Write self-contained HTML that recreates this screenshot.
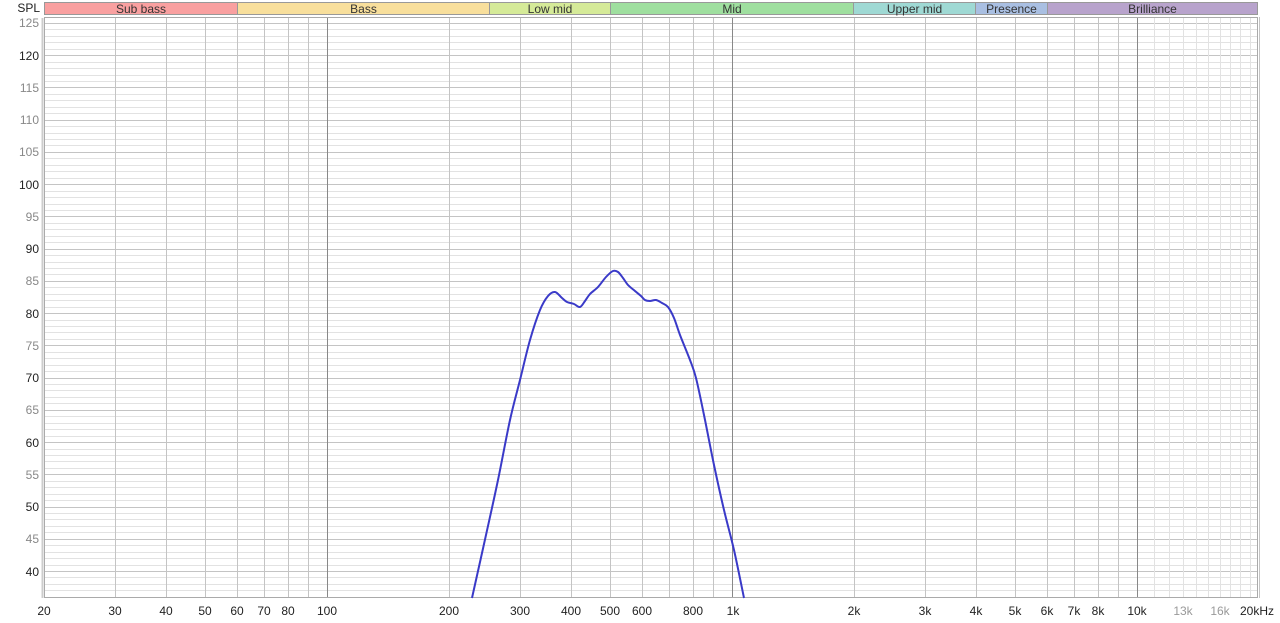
<!DOCTYPE html>
<html><head><meta charset="utf-8"><style>
body{margin:0;width:1280px;height:623px;background:#fff;font-family:"Liberation Sans",sans-serif;overflow:hidden;position:relative}
.yl{position:absolute;right:1241px;font-size:12px;color:#222;line-height:12px}
.xl{position:absolute;top:604px;font-size:12px;color:#222;transform:translateX(-50%)}
.band{position:absolute;top:2px;height:13px;font-size:12px;line-height:13px;text-align:center;color:#333;border:1px solid #999;box-sizing:border-box}
</style></head><body>
<svg id="g" width="1280" height="623" style="position:absolute;left:0;top:0"></svg>
<div class="yl" style="top:2px;right:1240px">SPL</div>
<div class="band" style="left:44px;width:194px;background:#f9a0a0">Sub bass</div>
<div class="band" style="left:237px;width:253px;background:#f8df9c">Bass</div>
<div class="band" style="left:489px;width:122px;background:#d5ea98">Low mid</div>
<div class="band" style="left:610px;width:244px;background:#9fdf9f">Mid</div>
<div class="band" style="left:853px;width:123px;background:#9fd9d4">Upper mid</div>
<div class="band" style="left:975px;width:73px;background:#a9bfe2">Presence</div>
<div class="band" style="left:1047px;width:211px;background:#b8a3cc">Brilliance</div>
<div class="yl" style="top:17px;color:#888">125</div>
<div class="yl" style="top:50px">120</div>
<div class="yl" style="top:82px;color:#888">115</div>
<div class="yl" style="top:114px;color:#888">110</div>
<div class="yl" style="top:146px;color:#888">105</div>
<div class="yl" style="top:179px">100</div>
<div class="yl" style="top:211px;color:#888">95</div>
<div class="yl" style="top:243px">90</div>
<div class="yl" style="top:275px;color:#888">85</div>
<div class="yl" style="top:308px">80</div>
<div class="yl" style="top:340px;color:#888">75</div>
<div class="yl" style="top:372px">70</div>
<div class="yl" style="top:404px;color:#888">65</div>
<div class="yl" style="top:437px">60</div>
<div class="yl" style="top:469px;color:#888">55</div>
<div class="yl" style="top:501px">50</div>
<div class="yl" style="top:533px;color:#888">45</div>
<div class="yl" style="top:566px">40</div>
<div class="xl" style="left:44px">20</div>
<div class="xl" style="left:115px">30</div>
<div class="xl" style="left:166px">40</div>
<div class="xl" style="left:205px">50</div>
<div class="xl" style="left:237px">60</div>
<div class="xl" style="left:264px">70</div>
<div class="xl" style="left:288px">80</div>
<div class="xl" style="left:327px">100</div>
<div class="xl" style="left:449px">200</div>
<div class="xl" style="left:520px">300</div>
<div class="xl" style="left:571px">400</div>
<div class="xl" style="left:610px">500</div>
<div class="xl" style="left:642px">600</div>
<div class="xl" style="left:693px">800</div>
<div class="xl" style="left:733px">1k</div>
<div class="xl" style="left:854px">2k</div>
<div class="xl" style="left:925px">3k</div>
<div class="xl" style="left:976px">4k</div>
<div class="xl" style="left:1015px">5k</div>
<div class="xl" style="left:1047px">6k</div>
<div class="xl" style="left:1074px">7k</div>
<div class="xl" style="left:1098px">8k</div>
<div class="xl" style="left:1137px">10k</div>
<div class="xl" style="left:1183px;color:#999">13k</div>
<div class="xl" style="left:1220px;color:#999">16k</div>
<div class="xl" style="left:1257px">20kHz</div>
<script>
var s='',X=function(f){return 327+405*Math.log10(f/100)};
var Y=function(d){return 23+(125-d)*6.447};
s+='<rect x="44" y="17" width="1214" height="581" fill="#fff"/>';
for(var d=36;d<=125;d++){var y=Math.round(Y(d))+.5;s+='<line x1="44" x2="1258" y1="'+y+'" y2="'+y+'" stroke="'+(d%5?'#e2e2e2':'#c4c4c4')+'"/>';}
var fs=[];for(var dec=10;dec<=10000;dec*=10)for(var k=1;k<10;k++){var f=k*dec;if(f>=20&&f<=20000)fs.push([f,k==1?'#888':'#c4c4c4']);}
for(var f=11000;f<20000;f+=1000)if(f%1000==0&&[20000].indexOf(f)<0)fs.push([f,'#e2e2e2']);
fs.forEach(function(a){var x=Math.round(X(a[0]))+.5;s+='<line y1="17" y2="598" x1="'+x+'" x2="'+x+'" stroke="'+a[1]+'"/>';});
s+='<rect x="44.5" y="17.5" width="1213" height="580" fill="none" stroke="#aaa"/>';
s+='<line x1="42.5" x2="42.5" y1="18" y2="598" stroke="#ccc" stroke-width="2"/>';
var p=[[472,598],[486,535],[498,480],[510,420],[520,380],[530,340],[540,310],[548,296],[555,292],[562,298],[567,302],[574,304],[580,307],[585,301],[590,294],[598,287],[606,277],[613,271],[618,272],[623,278],[628,285],[635,291],[641,296],[645,300],[650,301],[656,300],[662,303],[668,307],[674,318],[680,335],[690,360],[696,378],[704,415],[714,465],[724,510],[734,550],[744,598]];
var dd='M'+p[0].join(',');for(var i=1;i<p.length;i++){var a=p[i-1],b=p[i],c=p[Math.max(i-2,0)],e=p[Math.min(i+1,p.length-1)];dd+=' C'+(a[0]+(b[0]-c[0])/6)+','+(a[1]+(b[1]-c[1])/6)+' '+(b[0]-(e[0]-a[0])/6)+','+(b[1]-(e[1]-a[1])/6)+' '+b[0]+','+b[1];}
s+='<path d="'+dd+'" fill="none" stroke="#3a3ac8" stroke-width="2"/>';
document.getElementById('g').innerHTML=s;
</script>
</body></html>
